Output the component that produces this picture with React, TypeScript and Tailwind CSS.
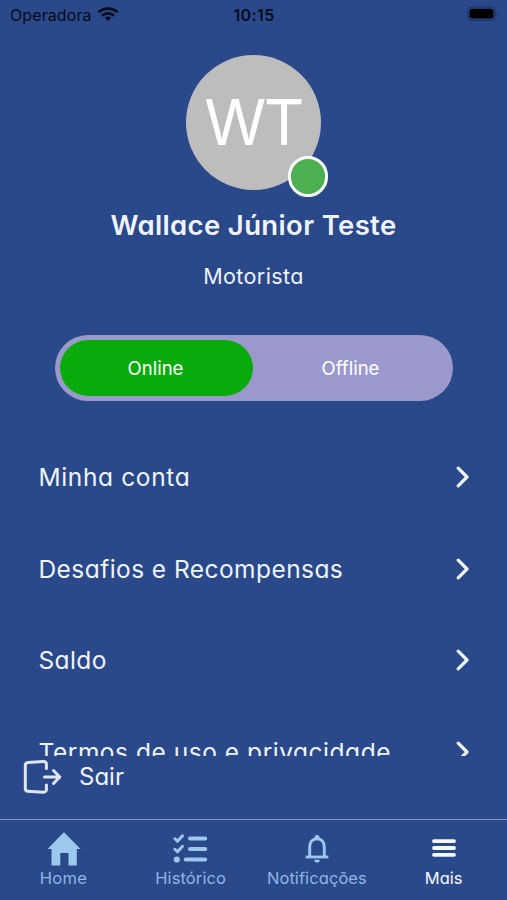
const menu = [
	{ label: "Minha conta", tracking: "tracking-[0.63px]" },
	{ label: "Desafios e Recompensas", tracking: "tracking-[0.44px]" },
	{ label: "Saldo", tracking: "tracking-[0.4px]" },
	{ label: "Termos de uso e privacidade", tracking: "tracking-[0.53px]" },
]

const StatusBar = () => (
	<div className="h-[29px] shrink-0 grid grid-cols-3 items-center pl-[10px] pr-[8px] text-[#050b1c]">
		<div className="flex items-center gap-[6px]">
			<span className="text-[16px] leading-none tracking-[0.1px]">Operadora</span>
			<svg className="w-5 h-[14px] mb-[2px]" viewBox="0 0 20 14">
				<g fill="none" stroke="currentColor" strokeWidth="2.7">
					<path d="M.5 5.2C6 .4 14 .4 19.5 5.2" />
					<path d="M4 8.7c3.4-3 8.6-3 12 0" />
				</g>
				<path d="M10 14l-3.2-3.2c1.8-1.6 4.6-1.6 6.4 0z" fill="currentColor" />
			</svg>
		</div>
		<span className="text-center text-[16px] leading-none font-semibold tracking-[0.4px] pr-[1px]">10:15</span>
		<svg className="justify-self-end w-8 h-4 mb-[2px]" viewBox="0 0 32 16">
			<rect x=".8" y="1" width="27.4" height="13.4" rx="4" fill="none" stroke="#1b3268" strokeWidth="1.2" />
			<rect x="2.5" y="2.8" width="24" height="9.8" rx="2.4" fill="#000" />
			<path d="M30 5.5v4.4c1.6-.8 1.6-3.6 0-4.4z" fill="#1b3268" />
		</svg>
	</div>
)

const Chevron = () => (
	<svg className="w-[14px] h-[22px]" viewBox="0 0 14 22" fill="none" stroke="#eef3fd" strokeWidth="3.2" strokeLinecap="round" strokeLinejoin="round">
		<path d="M2.2 2.2 11 11 2.2 19.8" />
	</svg>
)

const LogoutIcon = () => (
	<svg className="w-10 h-9" viewBox="0 0 40 36" fill="none" stroke="#dfe6f5" strokeWidth="3" strokeLinecap="round" strokeLinejoin="round">
		<path d="M24.4 9.5V5.2c0-1.8-1.2-2.9-3-2.8L5.8 3.5C4 3.7 3.3 4.6 3.3 6.4v23c0 1.800.7 2.700 2.500 2.800l15.600 1c1.800.1 3-1 3-2.800v-4.400" />
		<path d="M22.5 18h15.300M31.500 11.500l6.300 6.500-6.300 6.500" />
	</svg>
)

const HomeIcon = () => (
	<svg className="w-[34px] h-[34px] ml-[2px]" viewBox="0 0 34 34" fill="currentColor">
		<path d="M17.2.6 33.6 17h-3.800v16.600h-8.300V21h-8.200v12.600H4.500V17H.6L15.800 1.200c.5-.6 1-.8 1.400-.6z" />
	</svg>
)

const TasksIcon = () => (
	<svg className="w-[36px] h-[30px]" viewBox="0 0 36 30" fill="none" stroke="currentColor" strokeWidth="4" strokeLinecap="round">
		<path d="M18 4.500h15.200M18 15h15.200M13.800 25.500h19.400" />
		<path d="M3 4.800l2.500 2.500 5-5.500M3 15.300l2.500 2.500 5-5.500" strokeWidth="3" strokeLinejoin="round" />
		<circle cx="4.8" cy="25.5" r="3.1" fill="currentColor" stroke="none" />
	</svg>
)

const BellIcon = () => (
	<svg className="w-6 h-[30px]" viewBox="0 0 24 30" fill="none" stroke="currentColor">
		<path d="M4.700 23V13c0-5 2.800-8.300 7.300-8.300s7.300 3.300 7.300 8.300v10" strokeWidth="2.9" />
		<path d="M.700 23h22.600" strokeWidth="2.8" />
		<path d="M9.500 4V3.500a2.500 2.500 0 0 1 5 0V4zM9.200 25.700h5.600a2.800 2.800 0 0 1-5.600 0z" fill="currentColor" stroke="none" />
	</svg>
)

const BarsIcon = () => (
	<svg className="w-6 h-[20px] mb-[2px]" viewBox="0 0 24 20" stroke="currentColor" strokeWidth="3.8" strokeLinecap="round">
		<path d="M2 3.200h20M2 10h20M2 16.800h20" />
	</svg>
)

const tabs = [
	{ label: "Home", icon: <HomeIcon />, className: "text-[#9dc8ee]", text: "text-[#8db6e4] tracking-[0.3px]" },
	{ label: "Histórico", icon: <TasksIcon />, className: "text-[#9dc8ee]", text: "text-[#8db6e4] tracking-[0.1px] pl-[1px]" },
	{ label: "Notificações", icon: <BellIcon />, className: "text-[#9dc8ee]", text: "text-[#8db6e4] tracking-[0.08px]" },
	{ label: "Mais", icon: <BarsIcon />, className: "text-[#f5f8ff]", text: "tracking-[0px]" },
]

export default function App() {
	return (
		<div className="w-[507px] h-[900px] flex flex-col overflow-hidden bg-[#2a498b] font-['Inter',sans-serif] text-[#eef3fd]">
			<StatusBar />

			<div className="flex flex-col items-center shrink-0 pt-[25.5px] [font-feature-settings:'cv11']">
				<div className="relative w-[135px] h-[135px] rounded-full bg-[#bdbdbd] flex items-center justify-center">
					<span className="text-[63px] leading-none text-white tracking-[-2.5px] pr-[1px]">WT</span>
					<span className="absolute left-[102px] top-[101px] w-[40px] h-[41px] rounded-full bg-[#4caf50] border-[3px] border-white" />
				</div>
				<h1 className="mt-[17.5px] text-[27.5px] leading-[36px] font-semibold tracking-[0.35px] whitespace-nowrap">Wallace Júnior Teste</h1>
				<p className="mt-[19px] text-[21.5px] leading-[28px] tracking-[0.4px]">Motorista</p>
			</div>

			<div className="mt-[45px] ml-[55px] w-[398px] h-[66px] shrink-0 rounded-full bg-[#9b99cc] p-[5px] flex text-[18.5px] text-white">
				<div className="w-[193px] rounded-full bg-[#09ab0c] flex items-center justify-center pr-[2px] pt-[2px]">Online</div>
				<div className="flex-1 flex items-center justify-center pt-[2px]">Offline</div>
			</div>

			<div className="mt-[30px] h-[325px] shrink-0 overflow-hidden [font-feature-settings:'cv11']">
				{menu.map((item) => (
					<div key={item.label} className="h-[91.7px] pl-[38.5px] pr-[37px] flex items-center justify-between text-[24.5px] whitespace-nowrap">
						<span className={`pt-[1px] ${item.tracking}`}>{item.label}</span>
						<Chevron />
					</div>
				))}
			</div>

			<div className="h-[63px] shrink-0 pl-[22px] pb-[21px] flex items-center gap-[17px] text-[24px] leading-[30px] [font-feature-settings:'cv11']">
				<LogoutIcon />
				<span>Sair</span>
			</div>

			<nav className="flex-1 grid grid-cols-4 border-t border-[#7f93c4] [font-feature-settings:'cv11']">
				{tabs.map((tab) => (
					<div key={tab.label} className={`flex flex-col items-center pt-[11px] ${tab.className}`}>
						<div className="h-[36px] flex items-center">{tab.icon}</div>
						<span className={`text-[16.5px] leading-[22px] ${tab.text}`}>{tab.label}</span>
					</div>
				))}
			</nav>
		</div>
	)
}
